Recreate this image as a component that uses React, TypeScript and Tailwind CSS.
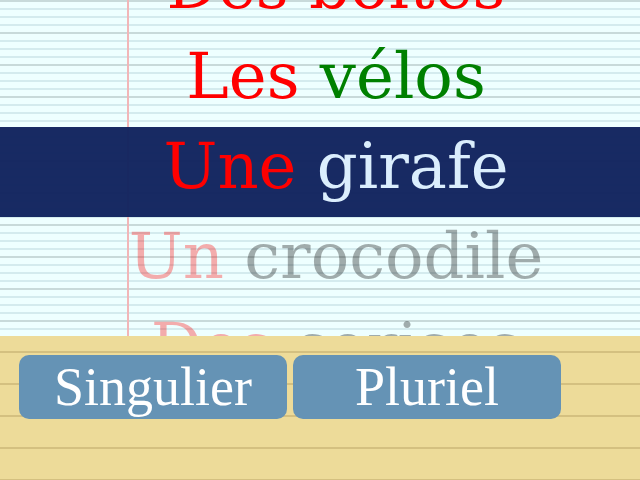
const rows = [
  { art: "Des", noun: "boîtes", artColor: "text-[#ff0000]", nounColor: "text-[#ff0000]", faded: false, active: false },
  { art: "Les", noun: "vélos", artColor: "text-[#ff0000]", nounColor: "text-[#008000]", faded: false, active: false },
  { art: "Une", noun: "girafe", artColor: "text-[#ff0000]", nounColor: "text-[#dbeefd]", faded: false, active: true },
  { art: "Un", noun: "crocodile", artColor: "text-[#ff0000]", nounColor: "text-black", faded: true, active: false },
  { art: "Des", noun: "cerises", artColor: "text-[#ff0000]", nounColor: "text-black", faded: true, active: false },
];

export default function App() {
  return (
    <div className="w-[640px] h-[480px] overflow-hidden flex flex-col">
      <div className="relative h-[336px] overflow-hidden bg-[#eeffff] bg-[repeating-linear-gradient(to_bottom,#c8dada_0px,#c8dada_2px,transparent_2px,transparent_32px),repeating-linear-gradient(to_bottom,#d4ebee_0px,#d4ebee_2px,transparent_2px,transparent_8px)]">
        <div className="absolute left-[127px] top-0 w-[2px] h-full bg-[#f2b6b8]" />
        <div className="relative -mt-[53px] flex flex-col font-['DejaVu_Serif',serif] text-[64px] leading-[78px]">
          {rows.map((r, i) => (
            <div
              key={i}
              className={`h-[90px] pl-[32px] flex justify-center ${r.active ? "bg-[rgba(17,35,94,0.97)]" : ""} ${r.faded ? "opacity-[0.32]" : ""}`}
            >
              <div className="whitespace-nowrap">
                <span className={r.artColor}>{r.art}</span>{" "}
                <span className={r.nounColor}>{r.noun}</span>
              </div>
            </div>
          ))}
        </div>
      </div>
      <div className="flex-1 bg-[#eddb99] bg-[repeating-linear-gradient(to_bottom,transparent_0px,transparent_15px,#d4c080_15px,#d4c080_17px,transparent_17px,transparent_32px)]">
        <div className="flex gap-[6px] pt-[19px] pl-[19px]">
          <button className="w-[268px] h-[64px] rounded-[10px] bg-[#6593b5] text-white font-['Liberation_Serif',serif] text-[54px] leading-none flex items-center justify-center">
            Singulier
          </button>
          <button className="w-[268px] h-[64px] rounded-[10px] bg-[#6593b5] text-white font-['Liberation_Serif',serif] text-[54px] leading-none flex items-center justify-center">
            Pluriel
          </button>
        </div>
      </div>
    </div>
  );
}
